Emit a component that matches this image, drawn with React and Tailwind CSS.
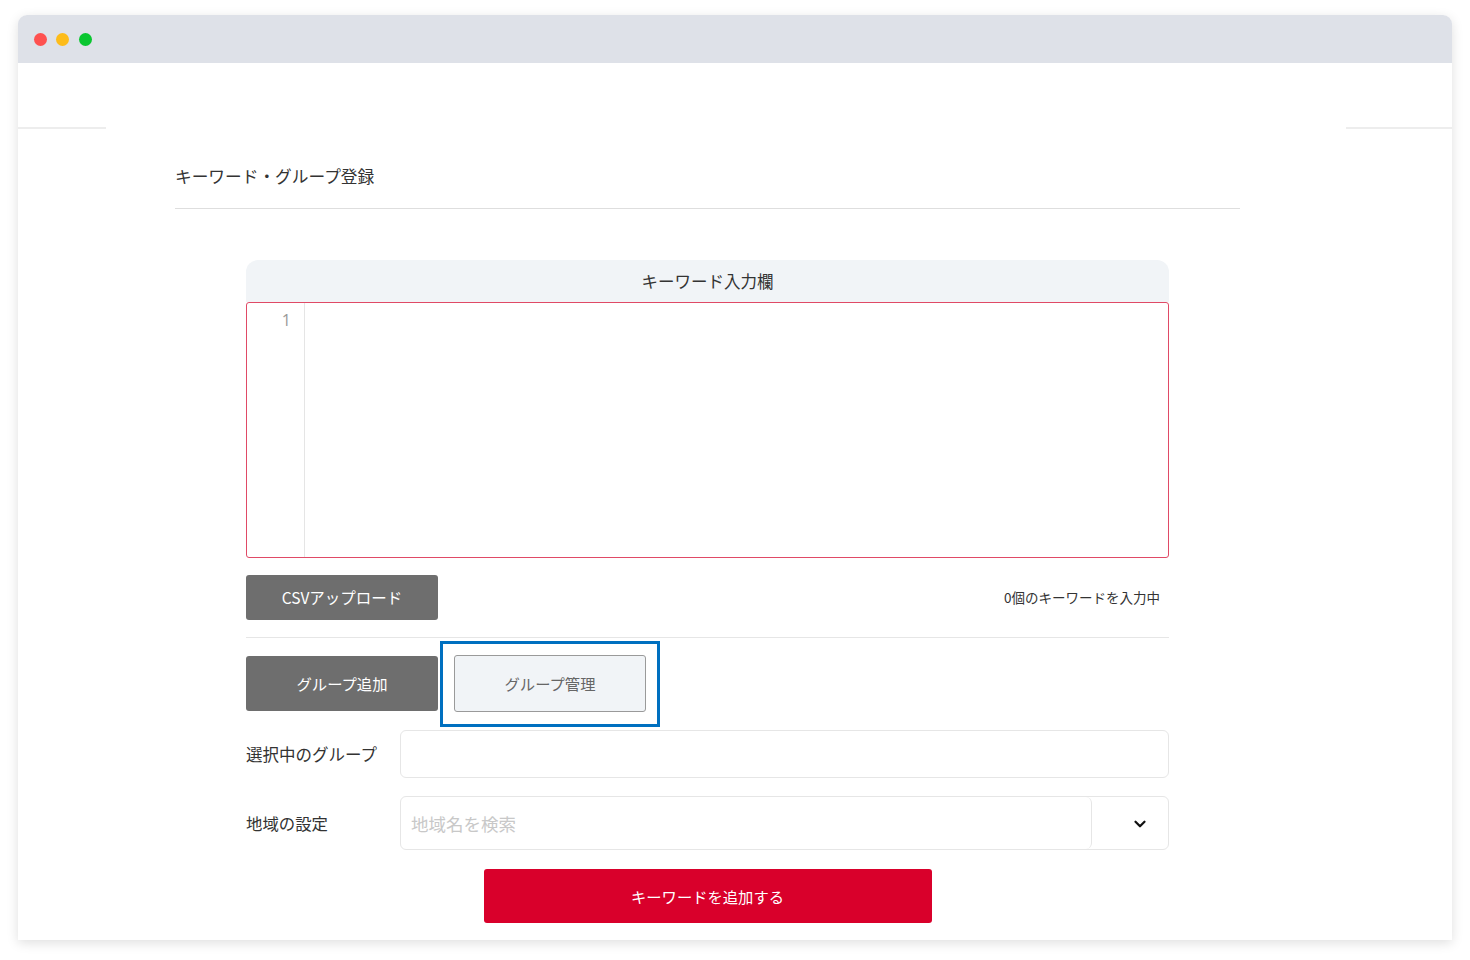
import { ChevronDown } from 'lucide-react';

function TrafficLights() {
  return (
    <div className="flex items-center gap-[9.5px] pl-[15.5px]">
      <span className="h-[13px] w-[13px] rounded-full bg-[#fe5150]" />
      <span className="h-[13px] w-[13px] rounded-full bg-[#fdbc1a]" />
      <span className="h-[13px] w-[13px] rounded-full bg-[#0ac630]" />
    </div>
  );
}

function KeywordEditor() {
  return (
    <div>
      <div className="flex h-[42px] items-center justify-center rounded-t-[12px] bg-[#f1f4f7] text-[16.5px] text-[#333]">
        キーワード入力欄
      </div>
      <div className="flex h-[256px] rounded-[3px] border-[1.5px] border-[#e04a66]">
        <div className="w-[58px] border-r border-[#e5e5e5] pr-[13px] pt-[5px] text-right font-['Open_Sans',sans-serif] text-[16px] text-[#999]">
          1
        </div>
        <div className="flex-1" />
      </div>
    </div>
  );
}

export default function App() {
  return (
    <div className="min-h-[960px] bg-white pt-[15px] font-['Noto_Sans_CJK_JP',sans-serif]">
      <div className="ml-[18px] w-[1434px] overflow-hidden rounded-t-[9px] shadow-[0_3px_12px_rgba(0,0,0,0.13)]">
        <div className="flex h-[48px] items-center bg-[#dee1e8]">
          <TrafficLights />
        </div>

        <div className="h-[877px] bg-white">
          <div className="flex h-[66px] items-end justify-between">
            <div className="h-[2px] w-[88px] bg-[#ededed]" />
            <div className="h-[2px] w-[106px] bg-[#ededed]" />
          </div>

          <div className="ml-[157px] w-[1065px]">
            <div className="border-b border-[#dedede] pb-[20px] pt-[35px] text-[16.7px] leading-[24px] text-[#333]">
              キーワード・グループ登録
            </div>

            <div className="mx-auto mt-[51px] w-[923px]">
              <KeywordEditor />

              <div className="mt-[17px] flex items-center justify-between">
                <button
                  type="button"
                  className="h-[45px] w-[192px] rounded-[3px] bg-[#6e6e6e] text-[15.5px] text-white"
                >
                  CSVアップロード
                </button>
                <span className="pr-[9px] text-[13.5px] text-[#333]">0個のキーワードを入力中</span>
              </div>

              <div className="mt-[17px] h-px bg-[#e6e6e6]" />

              <div className="mt-[18px] flex items-start gap-[16px]">
                <button
                  type="button"
                  className="h-[55px] w-[192px] rounded-[3px] bg-[#6e6e6e] text-[15.3px] text-white"
                >
                  グループ追加
                </button>
                <div className="relative -mt-px">
                  <button
                    type="button"
                    className="h-[57px] w-[192px] rounded-[3px] border border-[#9a9a9a] bg-[#f1f4f7] text-[15.3px] text-[#666]"
                  >
                    グループ管理
                  </button>
                  <div className="pointer-events-none absolute -bottom-[15px] -left-[14px] -right-[14px] -top-[14px] border-[3px] border-[#0070c0]" />
                </div>
              </div>

              <div className="mt-[18px] flex items-center">
                <span className="w-[154px] text-[16.5px] text-[#333]">選択中のグループ</span>
                <div className="h-[48px] flex-1 rounded-[6px] border border-[#e6e6e6]" />
              </div>

              <div className="mt-[18px] flex items-center">
                <span className="w-[154px] text-[16.4px] text-[#333]">地域の設定</span>
                <div className="flex h-[54px] flex-1 rounded-[6px] border border-[#e6e6e6]">
                  <input
                    className="h-full w-[691px] rounded-[6px] border-r border-[#e6e6e6] px-[10px] text-[17.5px] outline-none placeholder:text-[#c8c8c8]"
                    placeholder="地域名を検索"
                  />
                  <div className="flex flex-1 items-center justify-end pr-[19px]">
                    <ChevronDown size={18} strokeWidth={3} className="mt-[2px] text-[#111]" />
                  </div>
                </div>
              </div>

              <button
                type="button"
                className="mx-auto mt-[19px] block h-[54px] w-[448px] rounded-[3px] bg-[#d9002b] text-[15.3px] text-white"
              >
                キーワードを追加する
              </button>
            </div>
          </div>
        </div>
      </div>
    </div>
  );
}
